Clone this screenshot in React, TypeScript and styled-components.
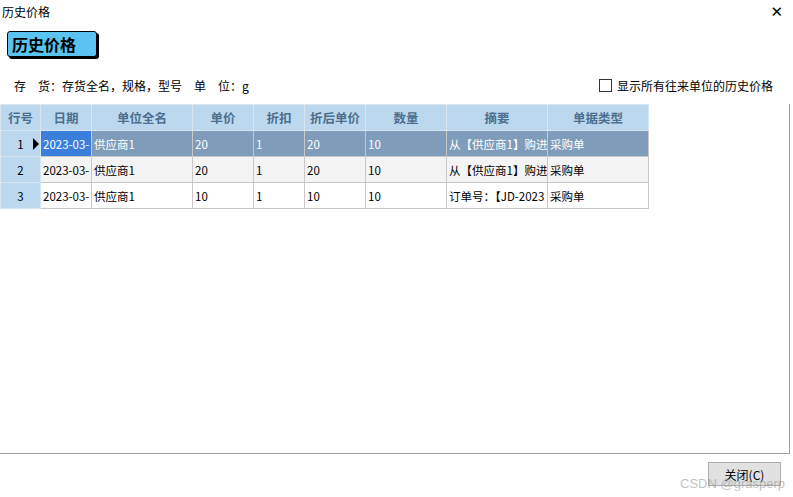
import React from 'react';
import styled, { createGlobalStyle } from 'styled-components';

const Global = createGlobalStyle`
  html, body { margin: 0; padding: 0; background: #fff; }
  body { font-family: "Noto Sans CJK SC", "Liberation Sans", sans-serif; font-size: 12px; color: #000; }
`;

const Window = styled.div`
  width: 793px;
  height: 497px;
  display: flex;
  flex-direction: column;
  background: #fff;
  overflow: hidden;
  position: relative;
`;

const TitleBar = styled.div`
  height: 22px;
  flex-shrink: 0;
  display: flex;
  align-items: center;
  justify-content: space-between;
  padding: 0 10px 0 2px;
  font-size: 12px;
`;

const CloseX = styled.span`
  font-size: 15px;
  font-family: "DejaVu Sans", sans-serif;
  margin-top: 2px;
`;

const Badge = styled.div`
  flex-shrink: 0;
  margin: 9px 0 0 7px;
  width: 84px;
  height: 24px;
  background: #5bc3f0;
  border: 1px solid #000;
  border-radius: 3px;
  box-shadow: 2px 2px 0 #000;
  font-size: 16px;
  font-weight: bold;
  line-height: 24px;
  padding-left: 4px;
`;

const InfoRow = styled.div`
  flex-shrink: 0;
  margin-top: 19px;
  height: 18px;
  display: flex;
  align-items: center;
  justify-content: space-between;
  padding: 0 20px 0 14px;
`;

const Info = styled.span`
  white-space: pre;
  word-spacing: 0;
`;

const Check = styled.label`
  display: flex;
  align-items: center;
  gap: 5px;
  &::before {
    content: '';
    width: 11px;
    height: 11px;
    border: 1px solid #333;
    background: #fff;
  }
`;

const GridArea = styled.div`
  flex-shrink: 0;
  margin-top: 10px;
  height: 349px;
  border-right: 1px solid #a0a0a0;
  border-bottom: 1px solid #a0a0a0;
  margin-right: 3px;
`;

const Table = styled.table`
  border-collapse: collapse;
  table-layout: fixed;
  width: 649px;
  font-size: 11.5px;
  line-height: 14px;
`;

const Th = styled.th`
  height: 25px;
  background: #bcd8ee;
  color: #4d6f8f;
  font-weight: bold;
  font-size: 12.5px;
  border: 1px solid #d8e6f2;
  text-align: center;
  padding: 0;
`;

const Td = styled.td<{ $sel?: boolean; $alt?: boolean; $cur?: boolean }>`
  height: 25px;
  padding: 0 2px;
  white-space: nowrap;
  overflow: hidden;
  border: 1px solid #c8c8c8;
  background: ${p => (p.$cur ? '#3a7fdc' : p.$sel ? '#7f9dbb' : p.$alt ? '#f4f4f4' : '#fff')};
  color: ${p => (p.$sel ? '#fff' : '#000')};
`;

const RowNo = styled.td<{ $sel?: boolean }>`
  height: 25px;
  padding: 0;
  background: #bcd8ee;
  border: 1px solid #d8e6f2;
  text-align: center;
  position: relative;
  &::after {
    content: ${p => (p.$sel ? "''" : 'none')};
    position: absolute;
    right: 1px;
    top: 7px;
    border-left: 6px solid #000;
    border-top: 6px solid transparent;
    border-bottom: 6px solid transparent;
  }
`;

const Footer = styled.div`
  flex: 1;
  display: flex;
  justify-content: flex-end;
  align-items: flex-start;
  padding: 8px 12px 0 0;
`;

const Button = styled.button`
  width: 73px;
  height: 24px;
  background: #e1e1e1;
  border: 1px solid #adadad;
  font-family: inherit;
  font-size: 12px;
`;

const Watermark = styled.span`
  position: absolute;
  right: 8px;
  bottom: 6px;
  font-size: 13px;
  color: rgba(150, 150, 150, 0.6);
  font-family: "Liberation Sans", sans-serif;
`;

const cols = [40, 51, 101, 61, 51, 61, 81, 101, 101];
const heads = ['行号', '日期', '单位全名', '单价', '折扣', '折后单价', '数量', '摘要', '单据类型'];
const rows = [
  ['2023-03-', '供应商1', '20', '1', '20', '10', '从【供应商1】购进', '采购单'],
  ['2023-03-', '供应商1', '20', '1', '20', '10', '从【供应商1】购进', '采购单'],
  ['2023-03-', '供应商1', '10', '1', '10', '10', '订单号：【JD-2023', '采购单'],
];

export default function App() {
  return (
    <Window>
      <Global />
      <TitleBar>
        <span>历史价格</span>
        <CloseX>✕</CloseX>
      </TitleBar>
      <Badge>历史价格</Badge>
      <InfoRow>
        <Info>{'存\u3000货：存货全名，规格，型号\u3000单\u3000位：g'}</Info>
        <Check>显示所有往来单位的历史价格</Check>
      </InfoRow>
      <GridArea>
        <Table>
          <colgroup>
            {cols.map((w, i) => (
              <col key={i} style={{ width: w }} />
            ))}
          </colgroup>
          <thead>
            <tr>
              {heads.map(h => (
                <Th key={h}>{h}</Th>
              ))}
            </tr>
          </thead>
          <tbody>
            {rows.map((r, i) => (
              <tr key={i}>
                <RowNo $sel={i === 0}>{i + 1}</RowNo>
                {r.map((c, j) => (
                  <Td key={j} $sel={i === 0} $cur={i === 0 && j === 0} $alt={i === 1}>
                    {c}
                  </Td>
                ))}
              </tr>
            ))}
          </tbody>
        </Table>
      </GridArea>
      <Footer>
        <Button>关闭(C)</Button>
      </Footer>
      <Watermark>CSDN @grasperp</Watermark>
    </Window>
  );
}
